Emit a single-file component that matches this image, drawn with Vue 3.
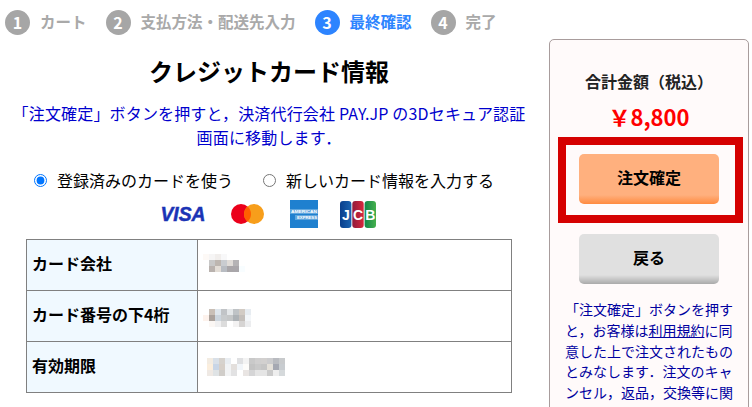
<script setup>
/* 購入フロー最終確認ページ */
const steps = [
  { no: 1, label: 'カート' },
  { no: 2, label: '支払方法・配送先入力' },
  { no: 3, label: '最終確認', current: true },
  { no: 4, label: '完了' },
]

// ぼかし済みの値 (モザイク)
const rows = [
  {
    label: 'カード会社',
    shift: { marginBottom: '5px' },
    blur: [
      ['fdf9f6', 'f6f5f5', 'f1eeec', 'f8f8f9', 'ffffff', 'ffffff', 'ffffff'],
      ['ffffff', 'c8c8c8', 'bdb6b0', 'c9ccd0', 'e0dcd8', 'b5b3b5', 'ffffff'],
      ['ffffff', 'b9b2ae', 'e3ddd6', 'b8bcc2', 'a9a6a9', 'a9a6aa', 'f8fdff'],
    ],
  },
  {
    label: 'カード番号の下4桁',
    shift: { marginTop: '3px' },
    blur: [
      ['ffffff', 'c9bfb6', 'dfe6ec', 'c1c4c7', 'e4e7e9', 'bfc3c6', 'd2cbc4', 'e7ecf1'],
      ['fdf2ec', 'aba29c', 'ccd5dd', 'c8cbcd', 'c5c7c8', 'adb2b6', 'c4bfbb', 'f3f6f9'],
      ['ffffff', 'fbf7f4', 'f0f0f1', 'dcdcdc', 'ffffff', 'f3f2f2', 'd6d4d3', 'ecedef'],
    ],
  },
  {
    label: '有効期限',
    shift: { marginLeft: '4px' },
    blur: [
      ['f3ece2', 'd9e0e8', 'd6d2cd', 'e9edf1', 'ffffff', 'dfe0e2', 'f3f3f3', 'c9c9c9', 'd0cfcf', 'd2d0cf', 'ccccce', 'b9bbc0', 'c8cacc'],
      ['fbeedd', 'c8d5e6', 'd6cfc8', 'f1f3f5', 'e3dfdc', 'f1f5f9', 'fdfcfa', 'c3c3c3', 'c9c9c9', 'c5c5c5', 'e4e0d9', 'a5a8b2', 'c8ccd0'],
      ['efe9e4', 'dfe3e5', 'd0cdc9', 'f2f3f4', 'e2e2e3', 'ffffff', 'e9e5e3', 'd5d5d6', 'e5e5e5', 'e5e5e5', 'cbcbcb', 'eeeeee', 'd5d9db'],
    ],
  },
]
</script>

<template>
  <div class="page">
    <main class="main">
      <ol class="steps">
        <li v-for="s in steps" :key="s.no" :class="['step', { 'step--current': s.current }]">
          <span class="step-no">{{ s.no }}</span>
          <span class="step-label">{{ s.label }}</span>
        </li>
      </ol>

      <h1 class="title">クレジットカード情報</h1>
      <p class="notice">「注文確定」ボタンを押すと，決済代行会社 PAY.JP の3Dセキュア認証<br>画面に移動します．</p>

      <div class="radios">
        <label class="radio"><input type="radio" name="card" checked>登録済みのカードを使う</label>
        <label class="radio"><input type="radio" name="card">新しいカード情報を入力する</label>
      </div>

      <div class="brands">
        <svg class="visa" viewBox="0 0 46 20" width="46" height="20">
          <text x="23" y="17" text-anchor="middle" textLength="45" lengthAdjust="spacingAndGlyphs">VISA</text>
        </svg>
        <svg viewBox="0 0 33 20" width="33" height="20">
          <circle cx="10" cy="10" r="10" fill="#eb001b" />
          <circle cx="23" cy="10" r="10" fill="#f79e1b" />
          <path d="M16.5 2.4a10 10 0 0 1 0 15.2a10 10 0 0 1 0-15.2z" fill="#ff5f00" />
        </svg>
        <svg class="amex" viewBox="0 0 28 28" width="28" height="28">
          <rect width="28" height="28" fill="#1f80cf" />
          <rect x="0" y="9" width="28" height="5" fill="#5ea5dd" />
          <rect x="5" y="15" width="23" height="5" fill="#5ea5dd" />
          <text x="14" y="13.2" text-anchor="middle" textLength="26" lengthAdjust="spacingAndGlyphs">AMERICAN</text>
          <text x="17" y="19.2" text-anchor="middle" textLength="20" lengthAdjust="spacingAndGlyphs">EXPRESS</text>
        </svg>
        <svg class="jcb" viewBox="0 0 36 27" width="36" height="27">
          <defs>
            <linearGradient id="jcb-j" x1="0" x2="1" y1="0" y2="0">
              <stop offset="0" stop-color="#0a3f8c" /><stop offset="1" stop-color="#1a63b0" />
            </linearGradient>
            <linearGradient id="jcb-c" x1="0" x2="1" y1="0" y2="0">
              <stop offset="0" stop-color="#8f1c3c" /><stop offset="1" stop-color="#d8263c" />
            </linearGradient>
            <linearGradient id="jcb-b" x1="0" x2="1" y1="0" y2="0">
              <stop offset="0" stop-color="#14874a" /><stop offset="1" stop-color="#45b04c" />
            </linearGradient>
          </defs>
          <rect x="0" y="0" width="11.4" height="27" rx="3" fill="url(#jcb-j)" />
          <rect x="12.3" y="0" width="11.4" height="27" rx="3" fill="url(#jcb-c)" />
          <rect x="24.6" y="0" width="11.4" height="27" rx="3" fill="url(#jcb-b)" />
          <text x="6" y="19">J</text>
          <text x="18" y="19">C</text>
          <text x="30.3" y="19">B</text>
        </svg>
      </div>

      <table class="card-table">
        <tbody>
          <tr v-for="row in rows" :key="row.label">
            <th>{{ row.label }}</th>
            <td>
              <span
                class="blur"
                :style="{ gridTemplateColumns: `repeat(${row.blur[0].length}, 6px)`, ...row.shift }"
              >
                <template v-for="(line, i) in row.blur" :key="i">
                  <i v-for="(c, j) in line" :key="j" :style="{ background: '#' + c }"></i>
                </template>
              </span>
            </td>
          </tr>
        </tbody>
      </table>
    </main>

    <aside class="side">
      <p class="total-label">合計金額（税込）</p>
      <p class="total">￥8,800</p>
      <div class="btn-wrap">
        <button class="btn btn--order" type="button">注文確定</button>
        <span class="frame"></span>
      </div>
      <button class="btn btn--back" type="button">戻る</button>
      <p class="terms">「注文確定」ボタンを押すと，お客様は<a href="#">利用規約</a>に同意した上で注文されたものとみなします．注文のキャンセル，返品，交換等に関して</p>
    </aside>
  </div>
</template>

<style>
html, body { overflow: hidden; background: #fff; }
</style>

<style scoped>
.page {
  display: flex;
  height: 407px;
  overflow: hidden;
  font-family: "Noto Sans CJK JP", "Noto Sans", sans-serif;
  color: #000;
}

.main { width: 538px; flex-shrink: 0; }

/* ─── ステップ ─── */
.steps {
  display: flex;
  gap: 19px;
  margin: 0;
  padding: 10px 0 0 5px;
  list-style: none;
}
.step {
  display: flex;
  align-items: center;
  gap: 10px;
  height: 25px;
  font-size: 15.5px;
  font-weight: 700;
  color: #a9a9a9;
}
.step-label { padding-bottom: 3px; }
.step-no {
  width: 25px;
  height: 25px;
  border-radius: 50%;
  background: #a6a6a6;
  color: #fff;
  font-size: 16px;
  line-height: 25px;
  text-align: center;
}
.step--current { color: #2d84ff; }
.step--current .step-no { background: #2d84ff; }

/* ─── 本文 ─── */
.title {
  margin: 18px 0 0;
  font-size: 24px;
  line-height: 36px;
  font-weight: 700;
  text-align: center;
}
.notice {
  margin: 12px 0 0;
  font-size: 16px;
  line-height: 24px;
  letter-spacing: 0.16px;
  text-align: center;
  color: #0000cd;
}

.radios {
  display: flex;
  gap: 30px;
  margin-top: 19px;
  padding-left: 34px;
  font-size: 16px;
  line-height: 24px;
}
.radio { display: flex; align-items: center; }
.radio input {
  width: 13px;
  height: 13px;
  margin: 0 10px 0 0;
}

.brands {
  display: flex;
  align-items: center;
  margin-top: 8px;
  padding-left: 160px;
  height: 28px;
}
.brands svg { flex-shrink: 0; }
.brands svg + svg { margin-left: 25px; }
.brands svg:nth-child(3) { margin-left: 26px; }
.brands svg:nth-child(4) { margin-left: 22px; }
.visa text {
  font: italic 700 20px "Liberation Sans", sans-serif;
  fill: #1a33b5;
  stroke: #1a33b5;
  stroke-width: 0.5px;
}
.amex text {
  font: 700 3.6px "Liberation Sans", sans-serif;
  fill: #fff;
}
.jcb text {
  font: 700 14px "Liberation Sans", sans-serif;
  fill: #fff;
  text-anchor: middle;
}

.card-table {
  width: 486px;
  margin: 11px 0 0 26px;
  border-collapse: collapse;
  table-layout: fixed;
  background: #fff;
}
.card-table th,
.card-table td {
  height: 51px;
  padding: 0 5px;
  border: 1px solid #808080;
  box-sizing: border-box;
}
.card-table th {
  width: 171px;
  padding-bottom: 5px;
  background: #f0f9ff;
  font-size: 16px;
  font-weight: 700;
  text-align: left;
}
.blur { display: grid; }
.blur i { display: block; height: 6px; }

/* ─── サイド ─── */
.side {
  box-sizing: border-box;
  width: 200px;
  height: 420px;
  margin: 39px 0 0 11px;
  padding: 0 15px;
  background: #fffafa;
  border: 1px solid #a89c9c;
  border-radius: 5px;
  flex-shrink: 0;
}
.total-label {
  margin: 29px 0 0;
  font-size: 16px;
  line-height: 24px;
  font-weight: 700;
  text-align: center;
  color: #222;
  white-space: nowrap;
}
.total {
  margin: 9px 0 0;
  font-size: 22px;
  line-height: 28px;
  font-weight: 700;
  text-align: center;
  color: #f00;
}
.btn-wrap {
  position: relative;
  width: 140px;
  margin: 24px auto 0;
}
.btn {
  display: block;
  width: 140px;
  height: 50px;
  margin: 0 auto;
  padding: 0 0 5px;
  border: 0;
  border-radius: 5px;
  font: 700 16px "Noto Sans CJK JP", sans-serif;
  color: #000;
}
.btn--order { background: linear-gradient(#ffb07e 0 82%, #ff8a3f 100%); }
.btn--back { margin-top: 30px; background: linear-gradient(#e0e0e0 0 82%, #aaa 100%); }
.frame {
  position: absolute;
  inset: -17px -24px -19px -21px;
  border: 8px solid #d50000;
  pointer-events: none;
}
.terms {
  margin: 15px 0 0;
  font-size: 14px;
  line-height: 20.8px;
  color: #0000a0;
}
.terms a { color: inherit; text-decoration: underline; }
</style>
